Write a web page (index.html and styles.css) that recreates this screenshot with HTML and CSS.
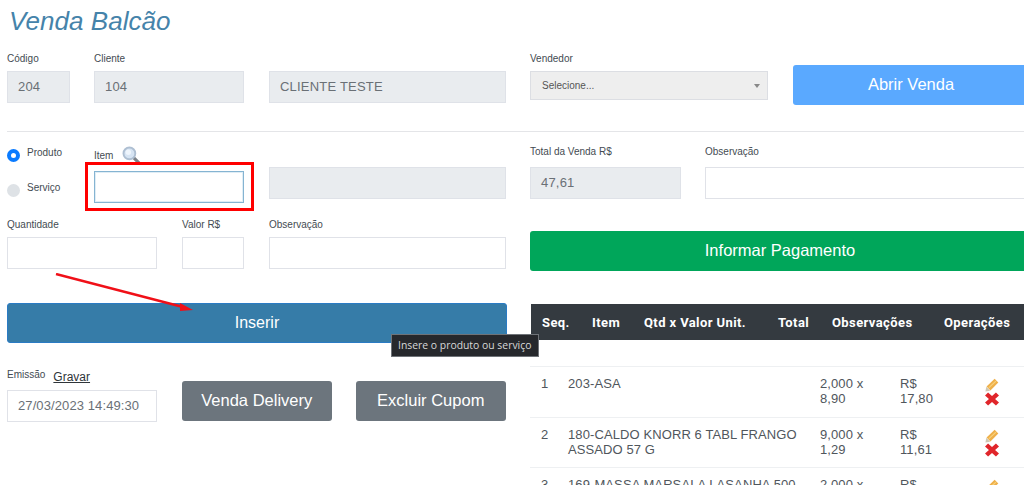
FILE: index.html
```html
<!DOCTYPE html>
<html lang="pt-BR">
<head>
<meta charset="utf-8">
<title>Venda Balcão</title>
<link rel="stylesheet" href="styles.css">
</head>
<body>
<div class="page">
  <h1 class="title">Venda Balcão</h1>

  <div class="top">
    <div class="left row r-top">
      <div class="field w-code"><label class="lbl">Código</label><div class="inp ro">204</div></div>
      <div class="field w-wide"><label class="lbl">Cliente</label><div class="inp ro">104</div></div>
      <div class="field w-name name-col"><label class="lbl">&nbsp;</label><div class="inp ro">CLIENTE TESTE</div></div>
    </div>
    <div class="right row">
      <div class="field w-vend"><label class="lbl">Vendedor</label><div class="select"><span>Selecione...</span><i class="caret"></i></div></div>
      <button class="btn btn-open">Abrir Venda</button>
    </div>
  </div>

  <hr class="rule">

  <div class="main">
    <div class="left">
      <div class="row r-item">
        <div class="radios">
          <div class="radio-row"><span class="radio on"></span><span class="lbl">Produto</span></div>
          <div class="radio-row r2"><span class="radio"></span><span class="lbl">Serviço</span></div>
        </div>
        <div class="field w-wide">
          <div class="item-lbl"><label class="lbl">Item</label>
            <svg class="lens" width="19" height="19" viewBox="0 0 18 18"><path d="M10.500 10.500l6 6" stroke="#7b8087" stroke-width="3" stroke-linecap="round"/><circle cx="7" cy="7" r="5.600" fill="#d6e4f3" stroke="#aebfd2" stroke-width="1.800"/><circle cx="6" cy="6" r="2.600" fill="#eef5fc"/></svg>
          </div>
          <div class="inp focus"></div>
        </div>
        <div class="field w-name item-desc"><div class="inp ro"></div></div>
      </div>
      <div class="row r-qty">
        <div class="field w-wide"><label class="lbl">Quantidade</label><div class="inp"></div></div>
        <div class="field w-val"><label class="lbl">Valor R$</label><div class="inp"></div></div>
        <div class="field w-name"><label class="lbl">Observação</label><div class="inp"></div></div>
      </div>
      <button class="btn btn-insert">Inserir</button>
      <div class="row r-bottom">
        <div class="field w-wide">
          <div class="em-lbl"><label class="lbl">Emissão</label><a class="link" href="#">Gravar</a></div>
          <div class="inp date">27/03/2023 14:49:30</div>
        </div>
        <button class="btn btn-gray">Venda Delivery</button>
        <button class="btn btn-gray">Excluir Cupom</button>
      </div>
    </div>

    <div class="right">
      <div class="row r-total">
        <div class="field w-total"><label class="lbl">Total da Venda R$</label><div class="inp ro">47,61</div></div>
        <div class="field w-obs"><label class="lbl">Observação</label><div class="inp"></div></div>
      </div>
      <button class="btn btn-pay">Informar Pagamento</button>
      <div class="thead">
        <span class="h1">Seq.</span><span class="h2">Item</span><span class="h3">Qtd x Valor Unit.</span><span class="h4">Total</span><span class="h5">Observações</span><span class="h6">Operações</span>
      </div>
      <div class="tbody">
        <div class="tr">
          <span>1</span><span class="desc">203-ASA</span><span>2,000 x<br>8,90</span><span>R$<br>17,80</span>
          <span class="ops">
            <svg width="14" height="14" viewBox="0 0 16 16"><path d="M.5 15.500L1.500 10 6 14.500z" fill="#cfc8b6"/><path d="M1.800 9.800L11 .8l4.200 4.200L6.200 14.200z" fill="#efb04a"/><path d="M4 10.500L12 3l1 1-8 7.500z" fill="#f7d27e"/></svg>
            <svg width="14" height="14" viewBox="0 0 16 16"><path d="M3.500 .5L8 4.500 12.500 .5 16 4 11.500 8 16 12 12.500 15.500 8 11.500 3.500 15.500 0 12 4.500 8 0 4z" fill="#e0262b"/></svg>
          </span>
        </div>
        <div class="tr">
          <span>2</span><span class="desc">180-CALDO KNORR 6 TABL FRANGO ASSADO 57 G</span><span>9,000 x<br>1,29</span><span>R$<br>11,61</span>
          <span class="ops">
            <svg width="14" height="14" viewBox="0 0 16 16"><path d="M.5 15.500L1.500 10 6 14.500z" fill="#cfc8b6"/><path d="M1.800 9.800L11 .8l4.200 4.200L6.200 14.200z" fill="#efb04a"/><path d="M4 10.500L12 3l1 1-8 7.500z" fill="#f7d27e"/></svg>
            <svg width="14" height="14" viewBox="0 0 16 16"><path d="M3.500 .5L8 4.500 12.500 .5 16 4 11.500 8 16 12 12.500 15.500 8 11.500 3.500 15.500 0 12 4.500 8 0 4z" fill="#e0262b"/></svg>
          </span>
        </div>
        <div class="tr">
          <span>3</span><span class="desc">169-MASSA MARSALA LASANHA 500 G</span><span>2,000 x<br>9,10</span><span>R$<br>18,20</span>
          <span class="ops">
            <svg width="14" height="14" viewBox="0 0 16 16"><path d="M.5 15.500L1.500 10 6 14.500z" fill="#cfc8b6"/><path d="M1.800 9.800L11 .8l4.200 4.200L6.200 14.200z" fill="#efb04a"/><path d="M4 10.500L12 3l1 1-8 7.500z" fill="#f7d27e"/></svg>
          </span>
        </div>
      </div>
    </div>
  </div>

  <div class="redbox"></div>
  <svg class="arrow" width="150" height="50" viewBox="0 0 150 50"><path d="M1 1L126 33.500" stroke="#f01018" stroke-width="2.500" fill="none"/><path d="M138 37L125 30 125 38z" fill="#f01018"/></svg>
  <div class="tip">Insere o produto ou serviço</div>
</div>
</body>
</html>
```

FILE: styles.css
```css
* { box-sizing: border-box; }
html, body { margin: 0; padding: 0; background: #fff; overflow: hidden; }
body { width: 1024px; height: 485px; font-family: "Liberation Sans", Arial, sans-serif; color: #495057; }
.page { position: relative; width: 1024px; height: 485px; overflow: hidden; padding: 0 0 0 7px; }
.title { margin: 0 0 0 2px; height: 51px; padding-top: 5px; font: italic 400 26px/33px "Liberation Sans", Arial, sans-serif; color: #4583aa; letter-spacing: .05px; }
.top { display: flex; gap: 24px; height: 70px; }
.left { width: 499px; flex: none; }
.right { width: 520px; flex: none; }
.row { display: flex; }
.r-top { gap: 24px; }
.name-col { margin-left: 1px; }
.field { display: flex; flex-direction: column; flex: none; }
.lbl { display: block; font-size: 10px; line-height: 13px; height: 20px; padding-top: 1px; color: #444b52; white-space: nowrap; }
.w-code { width: 63px; }
.w-wide { width: 150px; }
.w-name { width: 237px; }
.w-val { width: 62px; }
.w-vend { width: 238px; }
.w-total { width: 151px; }
.w-obs { width: 340px; }
.inp { height: 32px; border: 1px solid #e0e2e8; background: #fff; font-size: 13px; line-height: 30px; padding-left: 10px; color: #6a7076; letter-spacing: .2px; }
.ro { background: #e9ecef; border-color: #dfe2e8; }
.focus { border-color: #85b4d2; box-shadow: inset 0 0 0 1px #e0edf5; }
.select { position: relative; height: 29px; background: #eeeeee; border: 1px solid #dcdee3; font-size: 10px; line-height: 27px; padding-left: 11px; color: #555; }
.caret { position: absolute; right: 7px; top: 12px; border: 3px solid transparent; border-top: 4px solid #888; border-bottom: 0; }
.btn { display: block; border: 1px solid transparent; border-radius: 3px; font-family: "Liberation Sans", Arial, sans-serif; font-size: 16.500px; color: #fff; padding: 0 0 2px; height: 40px; flex: none; }
.btn-open { width: 236px; margin: -6px 0 0 25px; background: #5aa9ff; position: relative; top: 20px; }
.rule { border: 0; border-top: 1px solid #e4e5e8; margin: 10px 0 0; height: 0; }
.main { display: flex; gap: 24px; padding-top: 0; }
.r-item { height: 85px; position: relative; }
.radios { width: 87px; padding-top: 13px; }
.radio-row { display: flex; gap: 7px; height: 35px; }
.radio { width: 13px; height: 13px; margin-top: 4px; border-radius: 50%; background: #dee2e6; flex: none; }
.radio.on { background: #fff; border: 4px solid #0a7bff; }
.r-item > .w-wide { padding-top: 13px; }
.item-lbl { display: flex; height: 26px; gap: 9px; padding-top: 3px; }
.item-lbl .lbl { padding-top: 1px; }
.lens { margin-top: -2px; }
.item-desc { margin-left: 25px; padding-top: 35px; }
.r-qty { gap: 25px; height: 86px; }
.btn-insert { width: 500px; font-size: 16px; padding-bottom: 0; background: #367ca8; border-color: #2a7bc4; }
.r-bottom { margin-top: 24px; }
.r-bottom .btn { width: 149.500px; margin: 14px 0 0 25px; }
.r-bottom .btn + .btn { margin-left: 24.500px; }
.em-lbl { display: flex; height: 23px; gap: 8px; align-items: flex-start; }
.link { font-size: 12px; line-height: 16px; color: #2f353a; text-decoration: underline; margin-top: 2px; }
.date { height: 32px; font-size: 13px; padding-left: 10px; letter-spacing: .1px; }
.btn-gray { background: #6c757d; }
.r-total { gap: 24px; padding-top: 12px; height: 99px; }
.r-total .lbl { height: 23px; }
.btn-pay { width: 500px; background: #00a65a; margin-top: 0; }
.thead { position: relative; display: flex; height: 36px; margin: 33px 0 0 1px; background: #343a40; color: #fff; font: 700 13px/37px Roboto, "Liberation Sans", sans-serif; letter-spacing: .4px; white-space: nowrap; }
.h1 { margin-left: 11px; width: 50px; }
.h2 { width: 52px; }
.h3 { width: 134px; }
.h4 { width: 54px; }
.h5 { width: 112px; }
.h6 { width: 80px; }
.tbody { margin-top: 26px; }
.tr { display: grid; grid-template-columns: 27px 252px 80px 85px 40px; border-top: 1px solid #eef0f2; height: 50.500px; padding-top: 9px; padding-left: 11px; margin-left: 0; font-size: 13px; line-height: 15px; color: #50565c; letter-spacing: .1px; }
.desc { padding-right: 14px; }
.ops { display: flex; flex-direction: column; height: 30px; margin-top: 2px; }
.ops svg { display: block; }
.redbox { position: absolute; left: 85px; top: 162px; width: 169px; height: 49px; border: 3px solid #f00; }
.arrow { position: absolute; left: 55px; top: 273px; }
.tip { position: absolute; left: 391px; top: 334px; width: 148px; height: 23px; background: #26282c; border: 1px solid #6f7378; font: 10.400px/21px "Open Sans", sans-serif; color: #d8d8d8; padding-left: 6px; white-space: nowrap; }
```
